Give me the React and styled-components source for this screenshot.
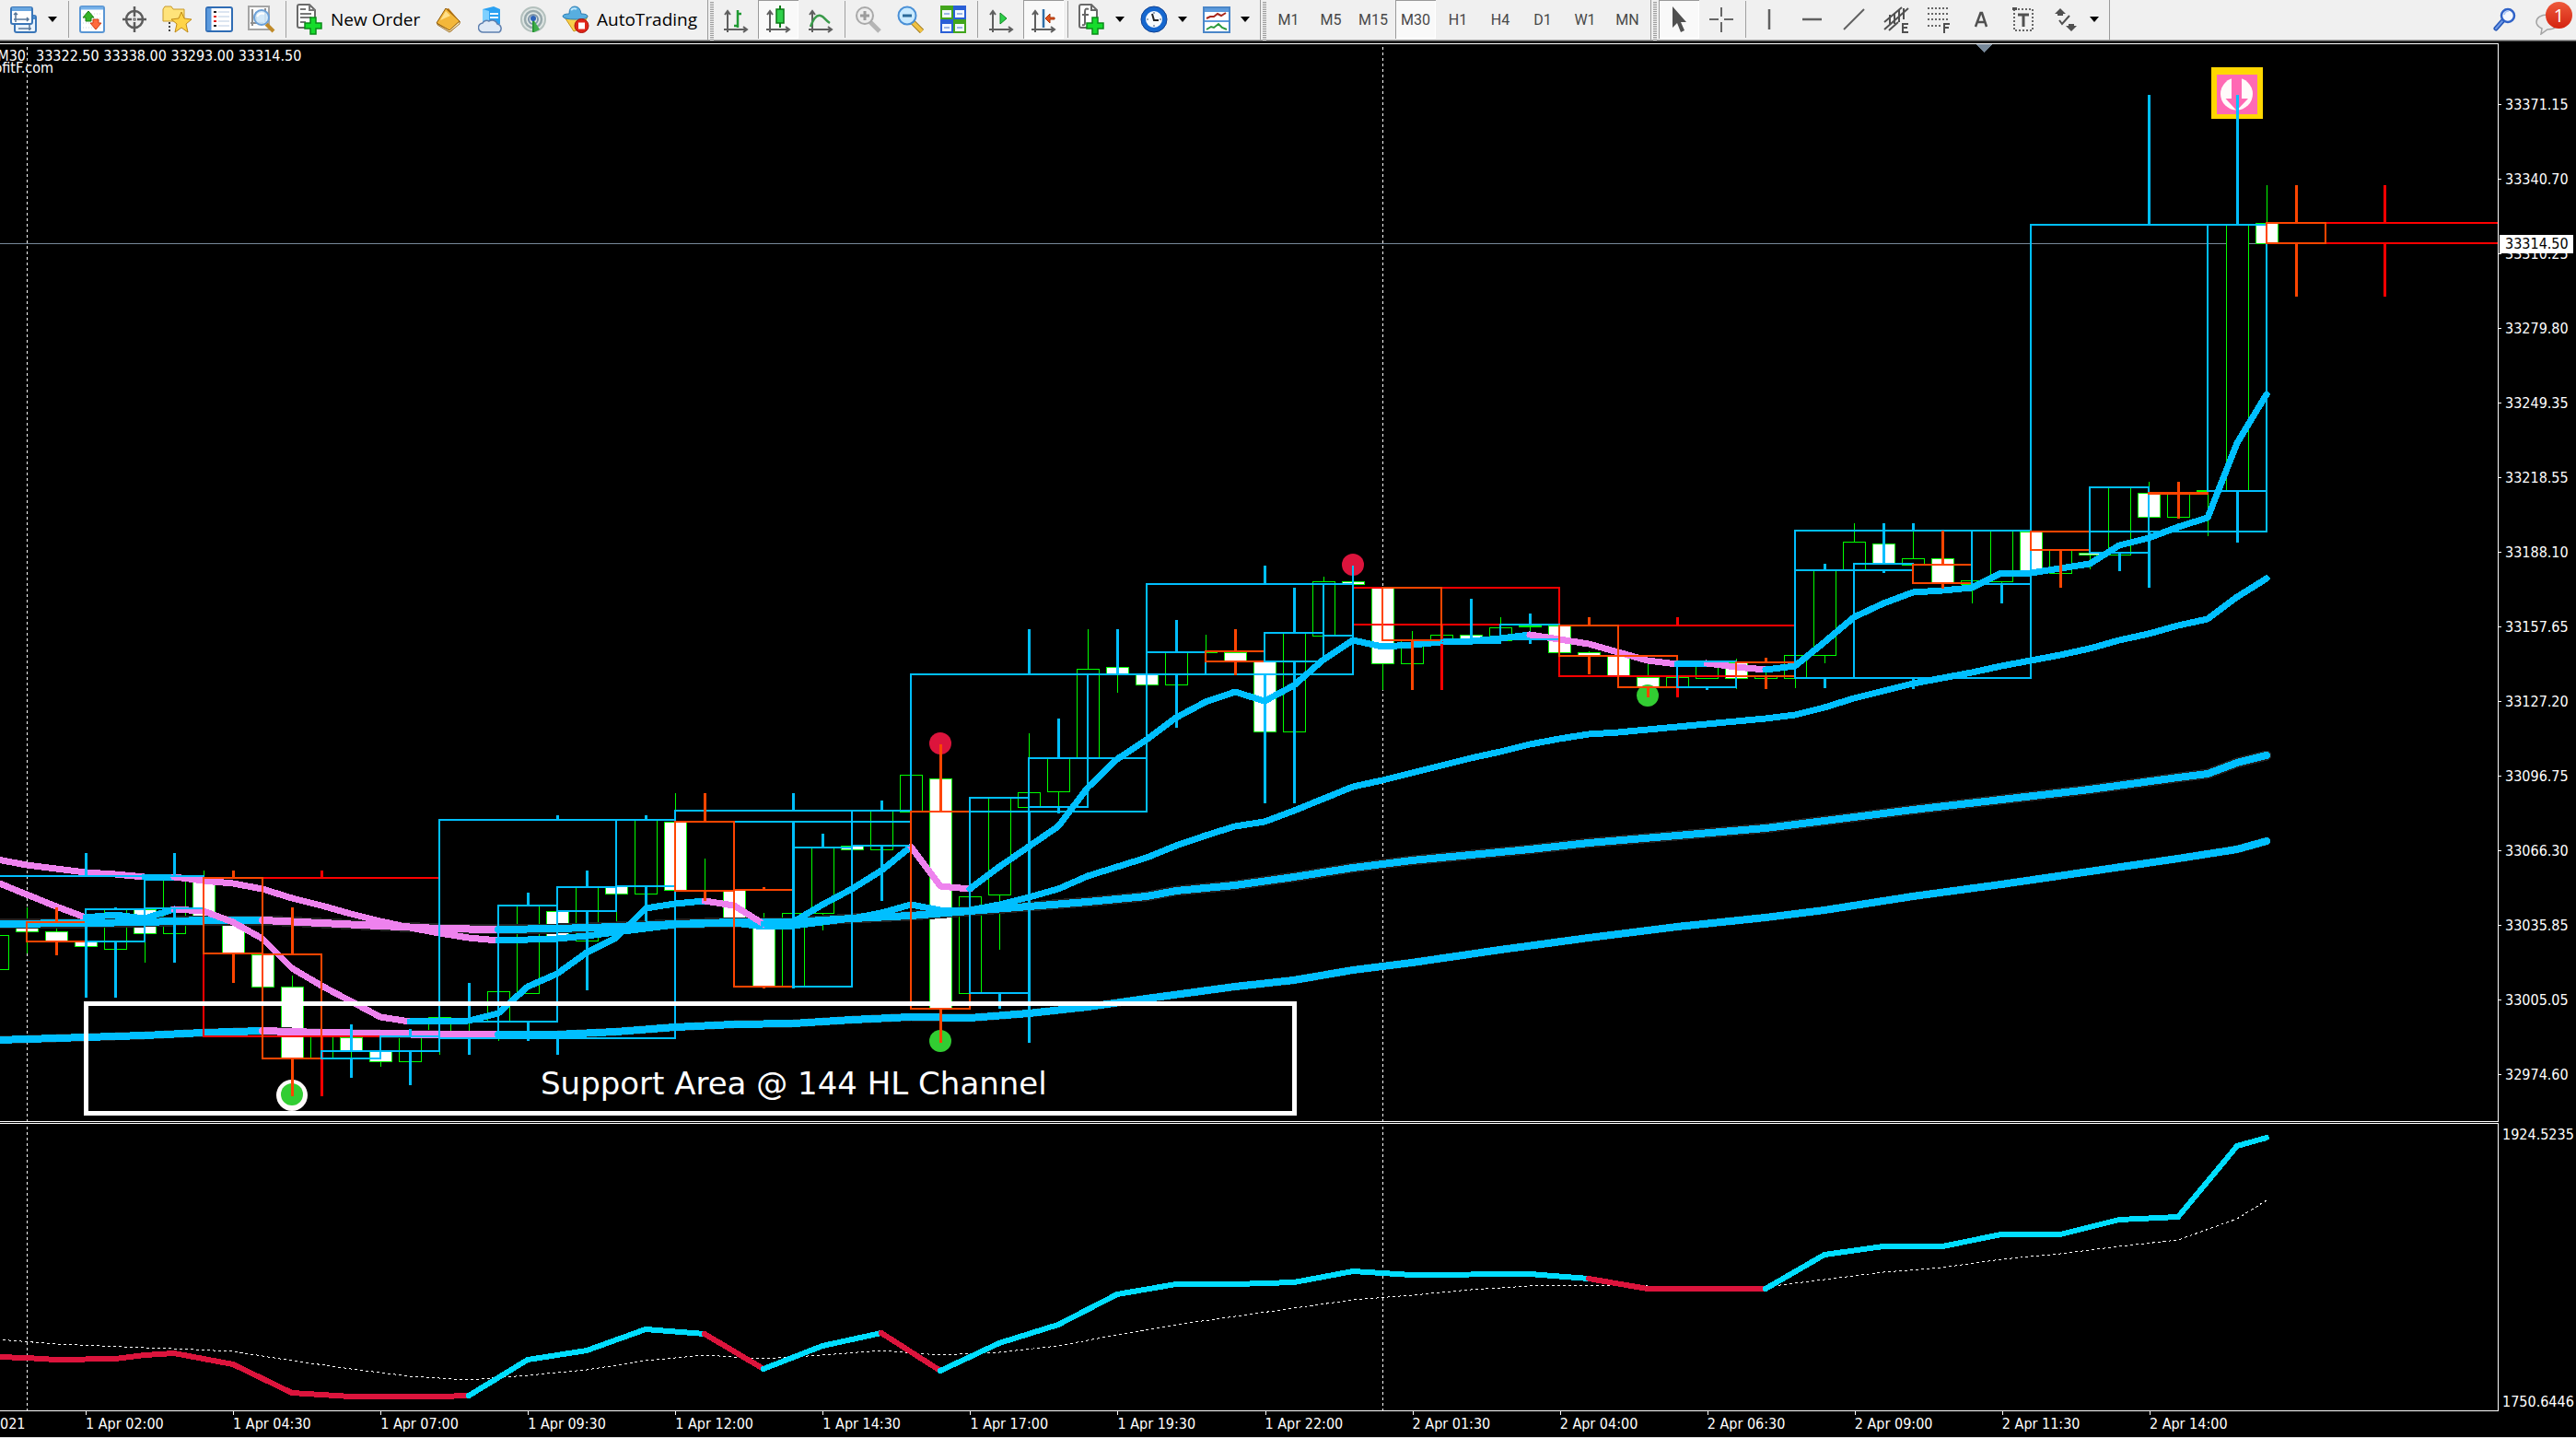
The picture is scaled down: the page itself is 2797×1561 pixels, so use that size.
import React from 'react';
import styled, { createGlobalStyle } from 'styled-components';

const BLUE = '#00BFFF';
const VIOLET = '#EE82EE';
const ORANGE = '#FF4500';
const RED = '#FF0000';
const GREEN = '#00FF00';
const CYAN = '#00DDFF';
const CRIMSON = '#DC143C';

const GlobalStyle = createGlobalStyle`
  * {
    box-sizing: border-box;
  }
  body {
    margin: 0;
    background: #000;
  }
`;

const Page = styled.div`
  min-height: 100vh;
  display: flex;
  flex-direction: column;
  background: #000;
  border-bottom: 1px solid #e4e4e4;
  font-family: 'DejaVu Sans Condensed', 'Noto Sans', sans-serif;
  font-size: 16px;
  color: #fff;
`;

/* ---------- toolbar ---------- */

const Toolbar = styled.header`
  height: 45px;
  display: flex;
  align-items: stretch;
  background: #f0f0f0;
  border-bottom: 1px solid #555;
  box-shadow: inset 0 -1px 0 #a0a0a0;
`;

const Group = styled.div`
  display: flex;
  align-items: stretch;
  padding: 0 2px 2px ${(p) => (p.$first ? '3px' : '0')};
  border-right: 1px solid #9a9a9a;
`;

const Grip = styled.span`
  width: 4px;
  margin: 2px 1px 0 2px;
  background: repeating-linear-gradient(180deg, #9c9c9c 0 1px, #f0f0f0 1px 2px);
`;

const Sep = styled.span`
  width: 1px;
  margin: 1px 2px 1px 3px;
  background: #a0a0a0;
`;

const ToolButton = styled.button`
  width: ${(p) => (p.$active ? '44px' : '46px')};
  margin: 0 ${(p) => (p.$active ? '1px' : '0')};
  padding: 0;
  display: flex;
  align-items: center;
  justify-content: center;
  border: 0;
  background: ${(p) => (p.$active ? '#f9f9f9' : 'transparent')};
  box-shadow: ${(p) => (p.$active ? 'inset 1px 1px 0 #9a9a9a, inset -1px -1px 0 #fff' : 'none')};
`;

const TextButton = styled.button`
  width: ${(p) => (p.$wide ? '164px' : '151px')};
  padding: 0 0 0 8px;
  display: flex;
  align-items: center;
  gap: 8px;
  border: 0;
  background: transparent;
  font-family: 'Open Sans', 'Noto Sans', sans-serif;
  font-size: 19px;
  line-height: 24px;
  white-space: nowrap;
  color: #000;
`;

const CaretButton = styled.button`
  width: 22px;
  padding: 0 0 0 3px;
  display: flex;
  align-items: center;
  border: 0;
  background: transparent;
`;

const PeriodButton = styled(ToolButton)`
  font-family: Roboto, 'Noto Sans', sans-serif;
  font-size: 16px;
  color: #484848;
`;

const Spacer = styled.div`
  flex: 1;
`;

const Tray = styled.div`
  display: flex;
  align-items: stretch;
  padding-bottom: 2px;
`;

const AlertButton = styled(ToolButton)`
  position: relative;
  width: 54px;
  justify-content: flex-start;
  padding-left: 10px;
`;

const Badge = styled.span`
  position: absolute;
  top: 2px;
  right: 4px;
  width: 29px;
  height: 29px;
  border-radius: 50%;
  background: linear-gradient(180deg, #ee5a3c, #d4230f);
  font-family: 'Open Sans', 'Noto Sans', sans-serif;
  font-size: 20px;
  line-height: 29px;
  text-align: center;
  color: #fff;
`;

/* ---------- chart area ---------- */

const Workspace = styled.main`
  flex: 1;
  display: grid;
  grid-template-columns: minmax(0, 1fr) 84px;
  grid-template-rows: auto auto 1fr;
  row-gap: 1px;
  padding-top: 2px;
`;

const Panel = styled.section`
  border: 1px solid #fff;
  border-left: 0;
  line-height: 0;
`;

const Plot = styled.svg`
  display: block;
  width: 100%;
  height: auto;
  shape-rendering: crispEdges;
`;

const PriceAxis = styled.div`
  position: relative;
  display: flex;
  flex-direction: column;
  padding: 26px 0 11px;
`;

const PriceLabel = styled.div`
  flex: 1;
  display: flex;
  align-items: center;
  gap: 4px;
  line-height: 20px;

  &::before {
    content: '';
    width: 3px;
    height: 1px;
    background: #fff;
  }
`;

const PriceTag = styled.div`
  position: absolute;
  top: 208px;
  left: 1px;
  width: 80px;
  padding-left: 6px;
  line-height: 20px;
  background: #fff;
  color: #000;
`;

const ValueAxis = styled.div`
  display: flex;
  flex-direction: column;
  justify-content: space-between;
  padding: 3px 0 0 4px;
  line-height: 20px;
`;

const TimeAxis = styled.div`
  display: flex;
  margin-top: -1px;
  line-height: 28px;
`;

const TimeStart = styled.div`
  flex: 93 0 0;
`;

const TimeLabel = styled.div`
  flex: 160 0 0;
  white-space: nowrap;

  &::before {
    content: '';
    display: block;
    width: 1px;
    height: 4px;
    margin-bottom: -4px;
    background: #fff;
  }
`;

const TimeEnd = styled.div`
  flex: 219 0 0;
`;

/* ---------- icons ---------- */

const Icon = ({ w = 28, children }) => (
  <svg width={w} height="30" viewBox={`0 0 ${w} 30`} aria-hidden="true">
    {children}
  </svg>
);

const Caret = ({ label }) => (
  <CaretButton aria-label={label}>
    <svg width="10" height="6" viewBox="0 0 10 6" aria-hidden="true">
      <path d="M0 0h10l-5 6z" fill="#000" />
    </svg>
  </CaretButton>
);

const Axes = () => (
  <path d="M5 29V6M1 26h24M2 10l3-4 3 4M22 23l4 3-4 3" fill="none" stroke="#5f5f5f" strokeWidth="2" />
);

const WindowsIcon = () => (
  <Icon w={32}>
    <rect x="6" y="11" width="23" height="18" rx="2" fill="#e9f3fc" stroke="#3a76b8" strokeWidth="2" />
    <path d="M7 13h21" stroke="#4b8dd0" strokeWidth="4" />
    <rect x="2" y="2" width="23" height="18" rx="2" fill="#fff" stroke="#3a76b8" strokeWidth="2" />
    <path d="M3 4h21" stroke="#6aa7e0" strokeWidth="4" />
    <path d="M7 8v10M5 15h16M5 10l2-2 2 2M19 13l2 2-2 2M10 25h14M22 20v7" fill="none" stroke="#57779b" strokeWidth="1.5" />
  </Icon>
);

const MarketWatchIcon = () => (
  <Icon>
    <rect x="1" y="1" width="26" height="28" rx="2" fill="#fff" stroke="#5a96d4" strokeWidth="2" />
    <path d="M2 3h24" stroke="#79b3ea" strokeWidth="3" />
    <path d="M4 9h20M4 14h20M4 19h20M4 24h20" stroke="#c9d4df" strokeDasharray="1 2" />
    <path d="M10 6l-6 7h3v4h6v-4h3z" fill="#35b526" stroke="#1c7c14" />
    <path d="M18 26l-6-7h3v-4h6v4h3z" fill="#ff6a3c" stroke="#d23c10" />
  </Icon>
);

const NavigatorIcon = () => (
  <Icon>
    <circle cx="14" cy="15" r="9" fill="none" stroke="#5c5c5c" strokeWidth="2.5" />
    <path d="M14 1v11M14 18v11M1 15h10M17 15h10" stroke="#5c5c5c" strokeWidth="2.5" />
    <circle cx="14" cy="15" r="2" fill="#8a8a8a" />
  </Icon>
);

const FavoritesIcon = () => (
  <Icon w={32}>
    <path d="M1 4l2-3h7l2 3h12v13H1z" fill="#ffe37a" stroke="#c89a2b" />
    <path d="M8 18v11" stroke="#444" strokeWidth="2" strokeDasharray="2 2" />
    <path d="M21 7l3 7 8 1-6 5 2 9-7-5-7 5 2-9-6-5 8-1z" fill="#ffd447" stroke="#c08a17" />
  </Icon>
);

const TerminalIcon = () => (
  <Icon w={30}>
    <rect x="1" y="2" width="28" height="26" rx="2" fill="#fff" stroke="#2f6cb4" strokeWidth="2" />
    <path d="M4 3v24" stroke="#5c9ade" strokeWidth="5" />
    <path d="M9 7h3M9 22h3" stroke="#222" strokeWidth="2" />
    <path d="M9 12h3M9 17h3" stroke="#e02020" strokeWidth="2" />
    <path d="M14 7h12M14 12h12M14 17h12M14 22h12" stroke="#b9cbe2" />
  </Icon>
);

const TesterIcon = () => (
  <Icon w={32}>
    <rect x="2" y="1" width="22" height="25" fill="#fbfbfb" stroke="#a5a5a5" strokeWidth="2" />
    <path d="M6 4v18M10 7v12M20 3v15M4 19h14" stroke="#8f8f8f" strokeWidth="2" />
    <path d="M21 20l8 8" stroke="#c08b2a" strokeWidth="4" />
    <circle cx="16" cy="13" r="8" fill="#cfe8fa" fillOpacity=".9" stroke="#6ba0d8" strokeWidth="2" />
    <path d="M11 12q3-5 8-3" fill="none" stroke="#fff" strokeWidth="2" />
  </Icon>
);

const Plus = () => (
  <path d="M16 15h6v6h6v6h-6v6h-6v-6h-6v-6h6z" fill="#16dc2c" stroke="#0a8a18" strokeWidth="1.5" />
);

const NewOrderIcon = () => (
  <svg width="30" height="34" viewBox="0 0 30 34" aria-hidden="true">
    <path d="M2 3q0-2 2-2h11l6 6v17q0 2-2 2H4q-2 0-2-2z" fill="#fff" stroke="#6a6a6a" strokeWidth="2" />
    <path d="M15 1v6h6M5 6h6M5 11h12M5 15h12M5 20h6" fill="none" stroke="#777" strokeWidth="2" />
    <Plus />
  </svg>
);

const BookIcon = () => (
  <Icon>
    <path d="M1 19L11 4l3-1 13 15-10 10-2 1z" fill="#b9730e" />
    <path d="M1 19L11 3l15 14-11 10z" fill="#f3b73a" stroke="#8e5b0c" />
    <path d="M2 20l13 7 11-10v3L15 29 2 21z" fill="#fdf0c4" stroke="#8e5b0c" strokeWidth=".8" />
    <path d="M5 16l6-10 5 5z" fill="#ffe08a" />
  </Icon>
);

const VpsIcon = () => (
  <Icon>
    <path d="M5 4l12-3 7 3v16H5z" fill="#2aa1f2" />
    <path d="M5 4l7 2v14H5z" fill="#7ed0ff" />
    <path d="M13 9h9M13 13h9" stroke="#eaf7ff" strokeWidth="2" />
    <path d="M6 29a5 5 0 0 1-1-10 5 5 0 0 1 7-2 6 6 0 0 1 9 3 5 5 0 0 1 2 9z" fill="#dfe9f5" stroke="#5e7fae" strokeWidth="1.5" />
  </Icon>
);

const SignalIcon = () => (
  <Icon w={30}>
    <circle cx="15" cy="15" r="13" fill="#dfe6e4" stroke="#b3c0bd" strokeWidth="2" />
    <circle cx="15" cy="15" r="9" fill="none" stroke="#98a9ac" strokeWidth="2.5" />
    <circle cx="15" cy="15" r="5" fill="none" stroke="#7d94a8" strokeWidth="2" />
    <path d="M15 15l7 11-6 3z" fill="#3fae4a" />
    <path d="M15 15v14" stroke="#2a9636" strokeWidth="2" />
    <circle cx="15" cy="14" r="3" fill="#2d62b8" />
  </Icon>
);

const AutoTradingIcon = () => (
  <Icon w={30}>
    <path d="M2 11l11 17 10-4 5-13z" fill="#f8cf4a" stroke="#c79517" />
    <path d="M8 9q0-8 6-8t7 8q7 0 7 3 0 3-13 3T1 12q0-3 7-3z" fill="#58aee0" stroke="#2c7db3" />
    <path d="M10 5q3-3 6-1" fill="none" stroke="#bfe6fb" strokeWidth="2" />
    <circle cx="21.5" cy="22" r="7.5" fill="#e0261a" stroke="#a81008" />
    <rect x="18" y="18.5" width="7" height="7" fill="#fff" />
  </Icon>
);

const BarChartIcon = () => (
  <Icon>
    <Axes />
    <path d="M16 24V5M12 22h4M16 9h4" stroke="#1f9a33" strokeWidth="2.5" fill="none" />
  </Icon>
);

const CandleIcon = () => (
  <Icon>
    <Axes />
    <path d="M16 0v24" stroke="#0b7a16" strokeWidth="2" />
    <rect x="12" y="4" width="8" height="15" fill="#2fd04a" stroke="#0b7a16" strokeWidth="1.5" />
  </Icon>
);

const LineChartIcon = () => (
  <Icon>
    <Axes />
    <path d="M3 23C7 12 11 10 14 11c4 1 5 5 10 8" stroke="#3a9a4a" strokeWidth="2.5" fill="none" />
  </Icon>
);

const ZoomInIcon = () => (
  <Icon w={30}>
    <path d="M17 18l10 10" stroke="#b5b5b5" strokeWidth="5" />
    <circle cx="11" cy="11" r="9" fill="#ededed" stroke="#a9a9a9" strokeWidth="2" />
    <path d="M6 11h10M11 6v10" stroke="#9c9c9c" strokeWidth="3" />
  </Icon>
);

const ZoomOutIcon = () => (
  <Icon w={30}>
    <path d="M17 18l10 10" stroke="#9a7416" strokeWidth="6" />
    <path d="M17 18l10 10" stroke="#f0c244" strokeWidth="4" />
    <circle cx="11" cy="11" r="9.5" fill="#c9eaff" stroke="#4a90d6" strokeWidth="2" />
    <path d="M6 11h10" stroke="#2b6b9b" strokeWidth="3" />
  </Icon>
);

const TileIcon = () => (
  <Icon>
    <path d="M0 0h14v15H0zM14 15h14v15H14z" fill="#42a51c" />
    <path d="M14 0h14v15H14zM0 15h14v15H0z" fill="#2a5fd6" />
    <path d="M2 5h10v8H2zM16 5h10v8H16zM2 20h10v8H2zM16 20h10v8H16z" fill="#f3f8ff" />
    <path d="M4 9h6M4 24h6M18 9h6M18 24h6" stroke="#9db7e8" strokeWidth="2" />
  </Icon>
);

const AutoScrollIcon = () => (
  <Icon>
    <Axes />
    <path d="M13 8l7 6-7 6z" fill="#2fd04a" stroke="#0f8a22" />
  </Icon>
);

const ShiftIcon = () => (
  <Icon>
    <Axes />
    <path d="M14 4v20" stroke="#2f6fa8" strokeWidth="2.5" />
    <path d="M16 14l5-5v4h5v2h-5v4z" fill="#e2521c" stroke="#a83608" />
  </Icon>
);

const IndicatorIcon = () => (
  <svg width="30" height="34" viewBox="0 0 30 34" aria-hidden="true">
    <path d="M2 3q0-2 2-2h11l6 6v17q0 2-2 2H4q-2 0-2-2z" fill="#fff" stroke="#6a6a6a" strokeWidth="2" />
    <path d="M15 1v6h6M12 6q-4-2-4 3v12q0 3-3 2M5 12h7" fill="none" stroke="#666" strokeWidth="2" />
    <Plus />
  </svg>
);

const ClockIcon = () => (
  <Icon w={30}>
    <circle cx="15" cy="15" r="11.5" fill="#f6fafd" stroke="#1668cf" strokeWidth="5" />
    <circle cx="15" cy="15" r="14" fill="none" stroke="#0c3f92" />
    <path d="M15 7v2M15 21v2M7 15h2M21 15h2" stroke="#7d8ea5" strokeWidth="1.5" />
    <path d="M13 9l2 7h5" stroke="#222" strokeWidth="2" fill="none" />
  </Icon>
);

const TemplateIcon = () => (
  <Icon w={30}>
    <rect x="1" y="2" width="28" height="27" fill="#fff" stroke="#4a86c8" strokeWidth="2" />
    <path d="M2 5h26" stroke="#5d9bdd" strokeWidth="4" />
    <path d="M2 17h26" stroke="#5d9bdd" strokeWidth="2" />
    <path d="M4 14l4-2h4l4-3 4 2 5-3" stroke="#a8281c" strokeWidth="2" fill="none" />
    <path d="M4 26l5-3 3 1 5-4 4 4 5 2" stroke="#2b9a3c" strokeWidth="2" fill="none" />
  </Icon>
);

const CursorIcon = () => (
  <Icon w={18}>
    <path d="M2 1v23l5-5 4 10 4-2-4-9h6z" fill="#505050" />
  </Icon>
);

const CrosshairIcon = () => (
  <Icon w={30}>
    <path d="M15 2v10M15 18v11M2 15h10M18 15h10" stroke="#666" strokeWidth="2" />
  </Icon>
);

const VLineIcon = () => (
  <Icon>
    <path d="M14 4v22" stroke="#606060" strokeWidth="2.5" />
  </Icon>
);

const HLineIcon = () => (
  <Icon>
    <path d="M4 15h21" stroke="#606060" strokeWidth="2.5" />
  </Icon>
);

const TrendIcon = () => (
  <Icon>
    <path d="M3 26L25 4" stroke="#606060" strokeWidth="2" />
  </Icon>
);

const ChannelIcon = () => (
  <Icon>
    <path d="M1 18L20 2M1 26L27 3M6 27l10-9M7 10v10M12 8v12M17 4v14M22 3v12" stroke="#505050" strokeWidth="2" />
    <path d="M27 20h-6v9h6M21 24h5" fill="none" stroke="#505050" strokeWidth="2" />
  </Icon>
);

const FiboIcon = () => (
  <Icon>
    <path d="M2 3h24M2 9h24M2 15h24M2 22h15" stroke="#666" strokeWidth="2" strokeDasharray="2 2" />
    <path d="M26 20h-6v10M20 24h5" fill="none" stroke="#505050" strokeWidth="2" />
  </Icon>
);

const LetterIcon = () => (
  <Icon>
    <path d="M8 23l5.5-15h1.5L20 23M10 18h9" fill="none" stroke="#505050" strokeWidth="2.5" />
  </Icon>
);

const LabelIcon = () => (
  <Icon>
    <rect x="4" y="4" width="20" height="23" fill="none" stroke="#666" strokeWidth="2" strokeDasharray="2 2" />
    <path d="M2 2h5v3H2z" fill="#505050" />
    <path d="M8 10h12M14 10v13" stroke="#505050" strokeWidth="3" />
  </Icon>
);

const ArrowsIcon = () => (
  <Icon>
    <path d="M8 3l6 6h-3v2H5V9H2zM20 28l-6-6h3v-2h6v2h3z" fill="#505050" />
    <path d="M7 16l3 4 8-9" fill="none" stroke="#505050" strokeWidth="2" />
  </Icon>
);

const SearchIcon = () => (
  <svg width="26" height="26" viewBox="0 0 26 26" aria-hidden="true">
    <path d="M11 14l-8 9" stroke="#2456b8" strokeWidth="5" strokeLinecap="round" />
    <path d="M10 15l-7 8" stroke="#6f9ae8" strokeWidth="2" strokeLinecap="round" />
    <circle cx="16" cy="9" r="7" fill="#f3f7fe" stroke="#2f62c8" strokeWidth="2.5" />
    <path d="M12 8q1-4 5-4" fill="none" stroke="#a9c4f5" strokeWidth="1.5" />
  </svg>
);

const ChatIcon = () => (
  <svg width="30" height="34" viewBox="0 0 30 34" aria-hidden="true">
    <path d="M13 12c8 0 12 4 12 8s-4 8-12 8l-7 5 1-6c-4-2-6-4-6-7 0-5 5-8 12-8z" fill="#ececec" stroke="#a3a3a3" strokeWidth="1.5" />
  </svg>
);

/* ---------- chart data: slot n sits 32 units right of slot n-1 ---------- */

const slotX = (n) => 29 + n * 32;

// slot, top, bottom, down(1)/up(0), high, low
const candles = [
  [-1, 1015, 1052, 0], [0, 1004, 1011, 1, 985, 1035], [1, 1011, 1022, 1, 1007, 1022], [2, 1022, 1027, 1],
  [3, 987, 1030, 0], [4, 987, 1013, 1, 987, 1045], [5, 955, 1013, 0], [6, 955, 994, 1, 945, 994],
  [7, 1000, 1035, 1], [8, 1036, 1071, 1], [9, 1071, 1149, 1, 1059, 1149], [10, 1122, 1149, 0],
  [11, 1126, 1141, 1, 1126, 1149], [12, 1141, 1152, 1, 1141, 1158], [13, 1125, 1152, 0], [14, 1104, 1125, 0, 1104, 1145],
  [15, 1106, 1107, 0, 1106, 1119], [16, 1076, 1109, 0, 1076, 1130], [17, 983, 1078, 0], [18, 989, 1016, 1],
  [19, 963, 1021, 0], [20, 962, 970, 1, 962, 1000], [21, 890, 970, 0], [22, 892, 966, 1, 861, 966],
  [23, 966, 967, 0, 932, 967], [24, 966, 996, 1], [25, 1004, 1071, 1, 991, 1071], [26, 991, 1071, 0],
  [27, 920, 991, 0, 920, 1010], [28, 918, 922, 1], [29, 880, 922, 0], [30, 841, 881, 0],
  [31, 845, 1094, 1], [32, 973, 1078, 0], [33, 866, 971, 0, 866, 1031], [34, 860, 876, 0, 796, 876],
  [35, 823, 859, 0, 823, 876], [36, 726, 823, 0, 683, 823], [37, 724, 731, 1, 724, 752], [38, 732, 743, 1],
  [39, 708, 743, 0], [40, 707, 708, 0, 689, 708], [41, 708, 718, 1], [42, 718, 794, 1],
  [43, 687, 794, 0], [44, 631, 690, 0, 626, 690], [45, 631, 634, 1], [46, 638, 720, 1, 638, 749],
  [47, 695, 720, 0, 685, 720], [48, 689, 694, 0], [49, 689, 693, 1], [50, 681, 695, 0, 670, 699],
  [51, 679, 680, 0, 679, 688], [52, 679, 708, 1], [53, 708, 712, 1, 707, 712], [54, 712, 734, 1],
  [55, 735, 746, 1, 720, 746], [56, 735, 746, 0], [57, 723, 736, 0], [58, 719, 736, 1, 715, 748],
  [59, 734, 736, 0, 730, 736], [60, 711, 736, 0, 711, 747], [61, 619, 711, 0, 619, 720], [62, 588, 618, 0, 568, 618],
  [63, 590, 611, 1], [64, 606, 613, 0, 576, 613], [65, 606, 632, 1], [66, 630, 634, 0, 630, 655],
  [67, 576, 631, 0, 576, 633], [68, 577, 620, 1], [69, 597, 622, 0], [70, 600, 602, 1, 600, 618],
  [71, 529, 602, 0], [72, 535, 561, 1, 523, 561], [73, 535, 561, 0], [74, 532, 533, 0, 532, 582],
  [75, 244, 533, 0], [76, 242, 264, 1, 201, 264],
];

// start slot, end slot, top, bottom, colour, upper wick tip, lower wick tip, wick slot
const h4Boxes = [
  [-2, 6, 951, 1003, BLUE, 926, 1083, 2],
  [6, 14, 953, 1125, RED, 945, 1190, 10],
  [14, 22, 890, 1127, BLUE, 885, 1145, 18],
  [22, 30, 880, 892, BLUE, 861, 1073, 26],
  [30, 38, 732, 881, BLUE, 683, 1132, 34],
  [38, 45, 634, 732, BLUE, 614, 872, 42],
  [45, 52, 638, 678, RED, 638, 749, 48],
  [52, 60, 679, 734, RED, 670, 757, 56],
  [60, 68, 576, 736, BLUE, 568, 748, 64],
  [68, 76, 244, 577, BLUE, 103, 638, 72],
  [76, 92, 242, 264, RED, 201, 322, 80],
];

const h1Boxes = [
  [0, 2, 1001, 1022, ORANGE, 985, 1037],
  [2, 4, 987, 1022, BLUE, 985, 1083],
  [4, 6, 951, 986, BLUE, 926, 1045],
  [6, 8, 953, 1035, ORANGE, 945, 1067],
  [8, 10, 1036, 1149, ORANGE, 985, 1190],
  [10, 12, 1141, 1149, BLUE, 1112, 1170],
  [12, 14, 1125, 1141, BLUE, 1117, 1178],
  [14, 16, 1109, 1127, BLUE, 1067, 1145],
  [16, 18, 983, 1109, BLUE, 969, 1130],
  [18, 20, 963, 989, BLUE, 945, 1075],
  [20, 22, 890, 962, BLUE, 885, 1000],
  [22, 24, 892, 967, ORANGE, 861, 978],
  [24, 26, 966, 1071, ORANGE, 963, 1073],
  [26, 28, 920, 1071, BLUE, 905, 1072],
  [28, 30, 880, 918, BLUE, 869, 978],
  [30, 32, 881, 1095, ORANGE, 808, 1132],
  [32, 34, 866, 1078, BLUE, 866, 1095],
  [34, 36, 823, 876, BLUE, 780, 883],
  [36, 38, 732, 823, BLUE, 683, 823],
  [38, 40, 708, 732, BLUE, 673, 790],
  [40, 42, 707, 718, ORANGE, 683, 733],
  [42, 44, 687, 718, BLUE, 638, 872],
  [44, 45, 634, 690, BLUE, 634, 690],
  [46, 48, 638, 695, ORANGE, 638, 749],
  [48, 50, 695, 698, BLUE, 650, 700],
  [50, 52, 678, 694, BLUE, 666, 699],
  [52, 54, 679, 712, ORANGE, 670, 732],
  [54, 56, 712, 746, ORANGE, 711, 757],
  [56, 58, 718, 746, BLUE, 718, 749],
  [58, 60, 719, 734, ORANGE, 714, 748],
  [60, 62, 619, 736, BLUE, 612, 747],
  [62, 64, 612, 619, BLUE, 568, 622],
  [64, 66, 613, 633, ORANGE, 576, 639],
  [66, 68, 576, 634, BLUE, 576, 655],
  [68, 70, 577, 597, ORANGE, 577, 638],
  [70, 72, 529, 600, BLUE, 529, 620],
  [72, 74, 535, 536, ORANGE, 523, 563],
  [74, 76, 244, 533, BLUE, 103, 589],
  [76, 78, 242, 264, ORANGE, 201, 322],
];

// vertical lines left over from a previous box: slot, y1, y2
const boxEdges = [
  [26, 892, 920], [45, 614, 634], [18, 963, 983], [62, 612, 736],
];

const fast = [
  [VIOLET, [[-1, 958], [0, 971], [1, 984], [2, 996]]],
  [BLUE, [[2, 996], [3, 993], [4, 997], [5, 987]]],
  [VIOLET, [[5, 987], [6, 989], [7, 1001], [8, 1019], [9, 1051], [10, 1070], [11, 1087], [12, 1104], [13, 1109]]],
  [BLUE, [[13, 1109], [15, 1108], [16, 1100], [17, 1071], [18, 1057], [19, 1034], [20, 1018], [21, 986], [22, 981], [23, 978]]],
  [VIOLET, [[23, 978], [24, 983], [25, 1003]]],
  [BLUE, [[25, 1003], [26, 1001], [27, 982], [28, 965], [29, 945], [30, 919]]],
  [VIOLET, [[30, 919], [31, 962], [32, 965]]],
  [BLUE, [[32, 965], [33, 941], [34, 919], [35, 897], [36, 855], [37, 824], [38, 803], [39, 779], [40, 762], [41, 751], [42, 761], [43, 744], [44, 716], [45, 695], [46, 702], [47, 700], [48, 697], [49, 696], [50, 693], [51, 689]]],
  [VIOLET, [[51, 689], [52, 694], [53, 699], [54, 708], [55, 717], [56, 721]]],
  [BLUE, [[56, 721], [57, 720]]],
  [VIOLET, [[57, 720], [58, 724], [59, 727]]],
  [BLUE, [[59, 727], [60, 723], [61, 697], [62, 670], [63, 655], [64, 643], [65, 641], [66, 638], [67, 622], [68, 622], [69, 617], [70, 612], [71, 592], [72, 584], [73, 572], [74, 562], [75, 481], [76, 428]]],
];

const slow = [
  [VIOLET, [[-1, 933], [0, 939], [1, 943], [2, 947], [3, 949], [4, 952]]],
  [BLUE, [[4, 952], [5, 952]]],
  [VIOLET, [[5, 952], [6, 956], [7, 959], [8, 965], [9, 975], [10, 983], [11, 992], [12, 1000], [13, 1007], [14, 1013], [15, 1018], [16, 1021]]],
  [BLUE, [[16, 1021], [18, 1019], [19, 1016], [20, 1012], [21, 1008], [22, 1004], [24, 1002], [25, 1006], [26, 1005], [27, 1001], [28, 997], [29, 991], [30, 982], [31, 988], [32, 988], [33, 982], [34, 974], [35, 965], [36, 951], [37, 941], [38, 931], [39, 918], [40, 907], [41, 897], [42, 892], [43, 880], [44, 867], [45, 854], [46, 847], [47, 839], [48, 831], [49, 823], [50, 816], [51, 808], [52, 802], [53, 797], [54, 795], [56, 789], [58, 783], [59, 780], [60, 776], [61, 768], [62, 758], [63, 750], [64, 742], [65, 736], [66, 730], [67, 723], [68, 717], [69, 711], [70, 704], [71, 695], [72, 688], [73, 679], [74, 672], [75, 648], [76, 628]]],
];

const channelTop = [
  [BLUE, [[-1, 1003], [2, 1002], [4, 1001], [6, 999], [8, 999]]],
  [VIOLET, [[8, 999], [10, 1002], [12, 1005], [14, 1008], [16, 1009]]],
  [BLUE, [[16, 1009], [18, 1008], [20, 1006], [22, 1003], [24, 1001], [26, 1001], [28, 997], [30, 994], [32, 989], [34, 984], [36, 979], [38, 973], [39, 967], [41, 961], [43, 952], [45, 942], [47, 934], [51, 922], [53, 915], [56, 907], [59, 899], [61, 891], [64, 879], [67, 868], [70, 857], [73, 844], [74, 840], [75, 828], [76, 820]]],
];

const channelBottom = [
  [BLUE, [[-1, 1129], [2, 1126], [4, 1124], [6, 1121], [8, 1119]]],
  [VIOLET, [[8, 1119], [10, 1121], [12, 1122], [14, 1123], [16, 1123]]],
  [BLUE, [[16, 1123], [18, 1123], [20, 1120], [22, 1115], [24, 1112], [26, 1111], [28, 1107], [30, 1104], [32, 1105], [34, 1100], [36, 1093], [38, 1084], [41, 1071], [43, 1064], [45, 1053], [47, 1045], [50, 1031], [53, 1018], [56, 1006], [59, 996], [61, 988], [64, 973], [67, 960], [70, 946], [73, 932], [75, 922], [76, 913]]],
];

const momentum = [
  [CRIMSON, [[-1, 1473], [0, 1474], [1, 1476], [3, 1475], [4, 1471], [5, 1469], [7, 1481], [9, 1512], [11, 1516], [14, 1516], [15, 1515]]],
  [CYAN, [[15, 1515], [17, 1476], [19, 1466], [21, 1443], [23, 1448]]],
  [CRIMSON, [[23, 1448], [25, 1486]]],
  [CYAN, [[25, 1486], [27, 1461], [29, 1447]]],
  [CRIMSON, [[29, 1447], [31, 1488]]],
  [CYAN, [[31, 1488], [33, 1458], [35, 1438], [37, 1405], [39, 1394], [41, 1394], [43, 1392], [45, 1380], [47, 1384], [51, 1383], [53, 1388]]],
  [CRIMSON, [[53, 1388], [55, 1399], [59, 1399]]],
  [CYAN, [[59, 1399], [61, 1362], [63, 1353], [65, 1353], [67, 1340], [69, 1340], [71, 1324], [73, 1321], [75, 1244], [76, 1235]]],
];

const average = [
  [-1, 1454], [1, 1459], [4, 1463], [5, 1464], [7, 1467], [9, 1477], [11, 1486], [13, 1494], [15, 1498], [17, 1493],
  [19, 1487], [21, 1477], [23, 1471], [25, 1475], [27, 1471], [29, 1466], [31, 1471], [33, 1468], [35, 1461], [37, 1449],
  [39, 1438], [41, 1429], [43, 1420], [45, 1411], [47, 1406], [49, 1400], [51, 1396], [53, 1395], [55, 1396], [59, 1397],
  [61, 1389], [63, 1381], [65, 1376], [67, 1367], [69, 1361], [71, 1353], [73, 1346], [75, 1323], [76, 1303],
];

const prices = [
  '33371.15', '33340.70', '33310.25', '33279.80', '33249.35', '33218.55', '33188.10',
  '33157.65', '33127.20', '33096.75', '33066.30', '33035.85', '33005.05', '32974.60',
];

const times = [
  '1 Apr 02:00', '1 Apr 04:30', '1 Apr 07:00', '1 Apr 09:30', '1 Apr 12:00',
  '1 Apr 14:30', '1 Apr 17:00', '1 Apr 19:30', '1 Apr 22:00', '2 Apr 01:30',
  '2 Apr 04:00', '2 Apr 06:30', '2 Apr 09:00', '2 Apr 11:30', '2 Apr 14:00',
];

const periods = ['M1', 'M5', 'M15', 'M30', 'H1', 'H4', 'D1', 'W1', 'MN'];

const toPoints = (pts) => pts.map(([n, y]) => `${slotX(n)},${y}`).join(' ');

const Curve = ({ segments, width, outline }) => (
  <g fill="none" strokeLinejoin="round" strokeLinecap="round">
    {outline && segments.map(([, pts], i) => (
      <polyline key={`o${i}`} points={toPoints(pts)} stroke="#222" strokeWidth={outline} />
    ))}
    {segments.map(([color, pts], i) => (
      <polyline key={i} points={toPoints(pts)} stroke={color} strokeWidth={width} />
    ))}
  </g>
);

const Candle = ({ data: [n, top, bottom, down, high = top, low = bottom] }) => {
  const x = slotX(n);
  return (
    <g stroke={GREEN}>
      {high < top && <path d={`M${x + 0.5} ${high}V${top}`} />}
      {low > bottom && <path d={`M${x + 0.5} ${bottom}V${low}`} />}
      <rect x={x - 11.5} y={top + 0.5} width="24" height={bottom - top} fill={down ? '#fff' : '#000'} />
    </g>
  );
};

const Box = ({ data: [a, b, top, bottom, color, high, low, wick = (a + b) / 2] }) => {
  const x = slotX(a);
  const w = slotX(wick) + 0.5;
  return (
    <g stroke={color} fill="none">
      <rect x={x} y={top} width={slotX(b) - x} height={bottom - top} strokeWidth="2" />
      {b - a > 1 && <path d={`M${w} ${high}V${top}M${w} ${bottom}V${low}`} strokeWidth="3" />}
    </g>
  );
};

const DaySeparator = ({ x, y1, y2 }) => (
  <path d={`M${x + 0.5} ${y1}V${y2}`} stroke="#fff" strokeDasharray="3 3" />
);

function MainChart() {
  return (
    <Plot viewBox="0 48 2712 1169" role="img" aria-label="M30 price chart">
      <DaySeparator x={29} y1={51} y2={1217} />
      <DaySeparator x={1501} y1={51} y2={1217} />
      <path d="M0 264.5H2712" stroke="#778899" />
      <path d="M2146 48h17l-8.5 9z" fill="#778899" />
      {candles.map((c) => <Candle key={c[0]} data={c} />)}

      <g shapeRendering="auto">
        <circle cx="317" cy="1189" r="17" fill="#FFFAFA" />
        <circle cx="317" cy="1188" r="12" fill="#32CD32" />
        <circle cx="1021" cy="1130" r="12" fill="#32CD32" />
        <circle cx="1789" cy="755" r="12" fill="#32CD32" />
        <circle cx="1021" cy="807" r="12" fill={CRIMSON} />
        <circle cx="1469" cy="613" r="12" fill={CRIMSON} />

        <rect x="2401" y="73" width="56" height="56" fill="#FFD700" />
        <rect x="2407" y="81" width="44" height="43" fill="#FF69B4" />
        <circle cx="2428.5" cy="102" r="17.5" fill="#FFFAFA" />
        <path d="M2423 83h11v24h7l-12.5 13-12-13h6.500z" fill="#FF69B4" />
      </g>

      <Curve segments={channelTop} width={8} outline={11} />
      <Curve segments={channelBottom} width={8} outline={9} />
      <Curve segments={slow} width={7} />
      <Curve segments={fast} width={7} />

      {h4Boxes.map((b) => <Box key={`h4-${b[0]}`} data={b} />)}
      {h1Boxes.map((b) => <Box key={`h1-${b[0]}`} data={b} />)}
      {boxEdges.map(([n, y1, y2]) => (
        <path key={n} d={`M${slotX(n)} ${y1}V${y2}`} stroke={BLUE} strokeWidth="2" />
      ))}

      <rect x="93.5" y="1089.5" width="1312" height="119" fill="none" stroke="#fff" strokeWidth="5" />
      <g fill="#fff" fontFamily="'DejaVu Sans', sans-serif" fontSize="34">
        <text x="587" y="1188">Support Area @ 144 HL Channel</text>
      </g>
      <g fill="#fff" fontSize="16">
        <text x="28" y="66" textAnchor="end">M30</text>
        <text x="39" y="66">33322.50 33338.00 33293.00 33314.50</text>
        <text x="58" y="79" textAnchor="end">ofitF.com</text>
      </g>
    </Plot>
  );
}

function IndicatorChart() {
  return (
    <Plot viewBox="0 1220 2712 311" role="img" aria-label="Momentum indicator">
      <DaySeparator x={29} y1={1223} y2={1531} />
      <DaySeparator x={1501} y1={1223} y2={1531} />
      <polyline points={toPoints(average)} fill="none" stroke="#fff" strokeDasharray="3 3" />
      <Curve segments={momentum} width={6} />
    </Plot>
  );
}

const Tool = ({ label, active, children }) => (
  <ToolButton aria-label={label} aria-pressed={active} $active={active}>{children}</ToolButton>
);

export default function App() {
  return (
    <Page>
      <GlobalStyle />
      <Toolbar>
        <Group $first>
          <Tool label="Profiles"><WindowsIcon /></Tool>
          <Caret label="Profiles menu" />
          <Sep />
          <Tool label="Market watch"><MarketWatchIcon /></Tool>
          <Tool label="Data window"><NavigatorIcon /></Tool>
          <Tool label="Navigator"><FavoritesIcon /></Tool>
          <Tool label="Terminal"><TerminalIcon /></Tool>
          <Tool label="Strategy tester"><TesterIcon /></Tool>
          <Sep />
          <TextButton><NewOrderIcon />New Order</TextButton>
          <Tool label="Editor"><BookIcon /></Tool>
          <Tool label="Hosting"><VpsIcon /></Tool>
          <Tool label="Signals"><SignalIcon /></Tool>
          <TextButton $wide><AutoTradingIcon />AutoTrading</TextButton>
        </Group>
        <Grip />
        <Group>
          <Tool label="Bar chart"><BarChartIcon /></Tool>
          <Tool label="Candlesticks" active><CandleIcon /></Tool>
          <Tool label="Line chart"><LineChartIcon /></Tool>
          <Sep />
          <Tool label="Zoom in"><ZoomInIcon /></Tool>
          <Tool label="Zoom out"><ZoomOutIcon /></Tool>
          <Tool label="Tile windows"><TileIcon /></Tool>
          <Sep />
          <Tool label="Auto scroll"><AutoScrollIcon /></Tool>
          <Tool label="Chart shift" active><ShiftIcon /></Tool>
          <Sep />
          <Tool label="Indicators"><IndicatorIcon /></Tool>
          <Caret label="Indicators menu" />
          <Tool label="Periods"><ClockIcon /></Tool>
          <Caret label="Periods menu" />
          <Tool label="Templates"><TemplateIcon /></Tool>
          <Caret label="Templates menu" />
        </Group>
        <Grip />
        <Group>
          {periods.map((p) => (
            <PeriodButton key={p} $active={p === 'M30'}>{p}</PeriodButton>
          ))}
        </Group>
        <Grip />
        <Group>
          <Tool label="Cursor" active><CursorIcon /></Tool>
          <Tool label="Crosshair"><CrosshairIcon /></Tool>
          <Sep />
          <Tool label="Vertical line"><VLineIcon /></Tool>
          <Tool label="Horizontal line"><HLineIcon /></Tool>
          <Tool label="Trendline"><TrendIcon /></Tool>
          <Tool label="Equidistant channel"><ChannelIcon /></Tool>
          <Tool label="Fibonacci"><FiboIcon /></Tool>
          <Tool label="Text"><LetterIcon /></Tool>
          <Tool label="Text label"><LabelIcon /></Tool>
          <Tool label="Arrows"><ArrowsIcon /></Tool>
          <Caret label="Arrows menu" />
        </Group>
        <Spacer />
        <Tray>
          <Tool label="Search"><SearchIcon /></Tool>
          <AlertButton aria-label="Notifications"><ChatIcon /><Badge>1</Badge></AlertButton>
        </Tray>
      </Toolbar>

      <Workspace>
        <Panel><MainChart /></Panel>
        <PriceAxis>
          {prices.map((p) => <PriceLabel key={p}>{p}</PriceLabel>)}
          <PriceTag>33314.50</PriceTag>
        </PriceAxis>
        <Panel><IndicatorChart /></Panel>
        <ValueAxis>
          <span>1924.5235</span>
          <span>1750.6446</span>
        </ValueAxis>
        <TimeAxis>
          <TimeStart>021</TimeStart>
          {times.map((t) => <TimeLabel key={t}>{t}</TimeLabel>)}
          <TimeEnd />
        </TimeAxis>
      </Workspace>
    </Page>
  );
}
